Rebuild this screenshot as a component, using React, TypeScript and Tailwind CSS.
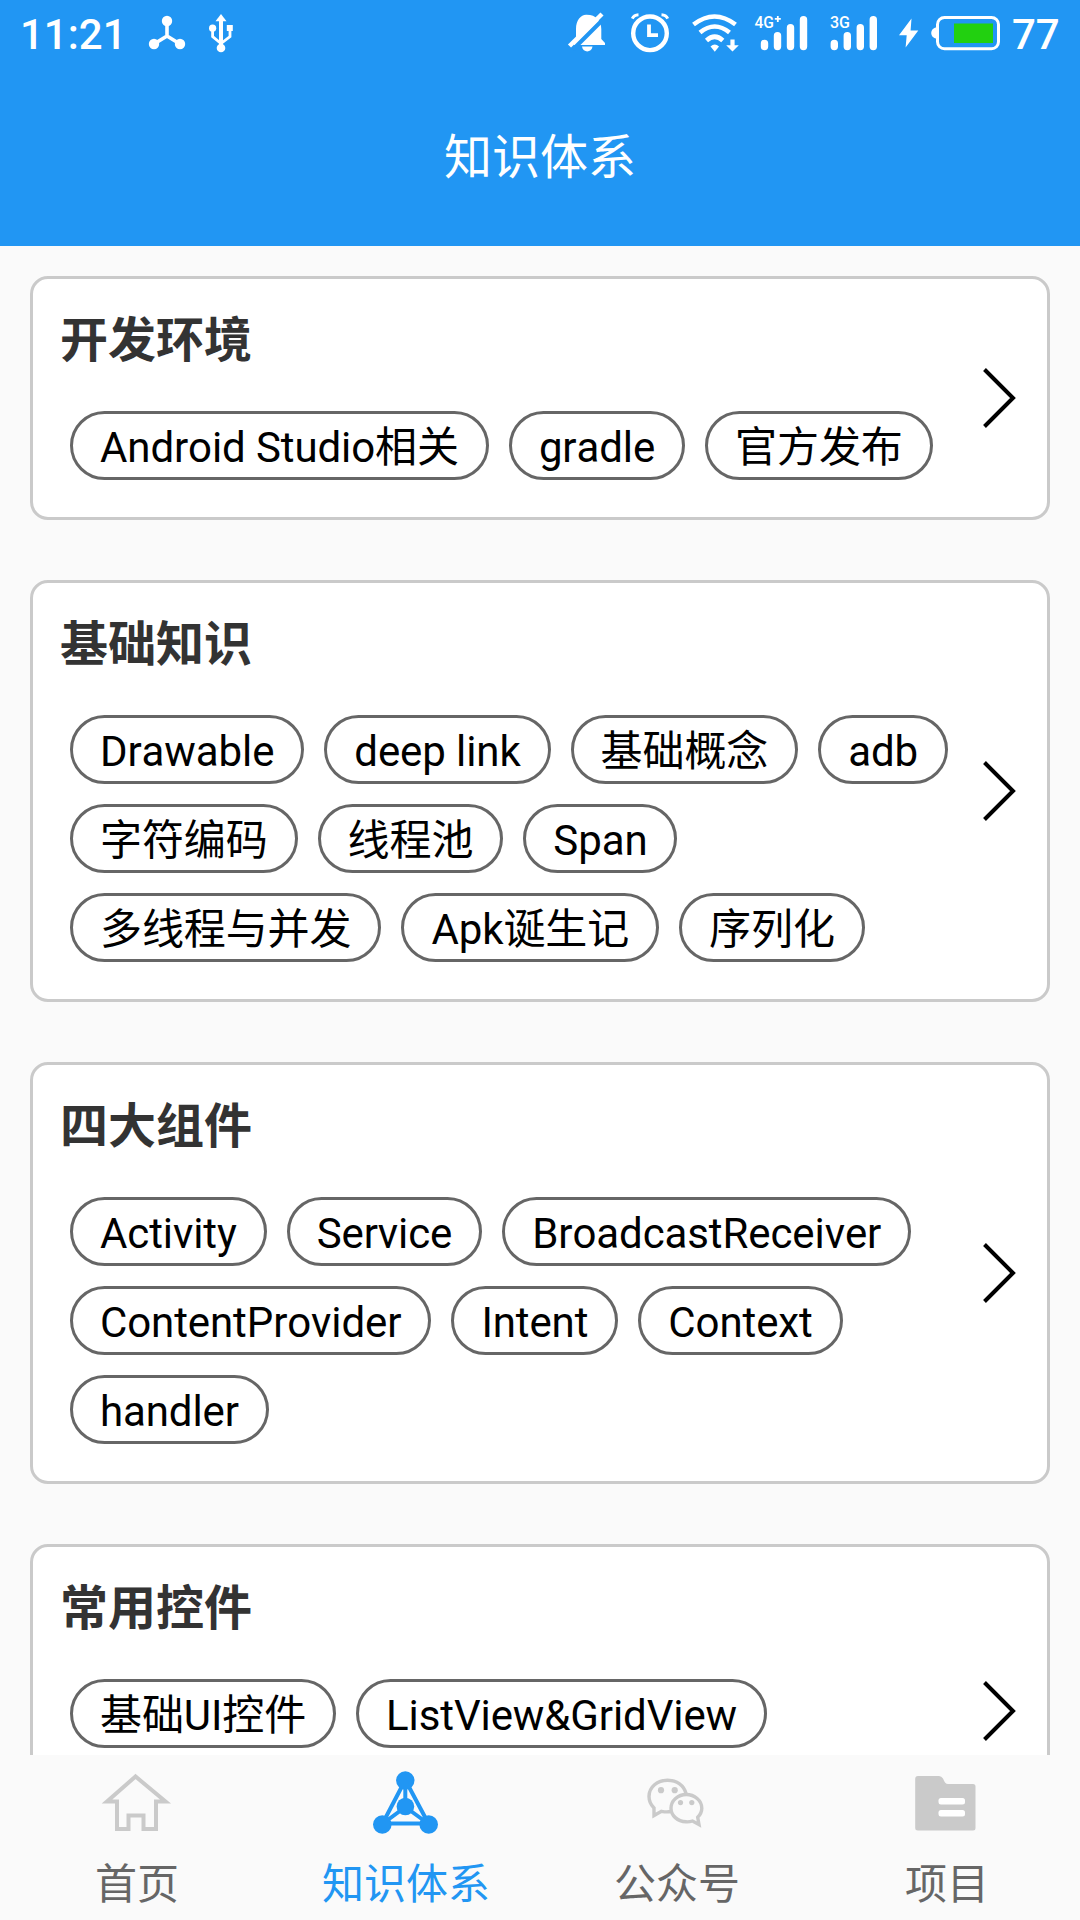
import type { ReactNode } from "react";

type Category = { title: string; tags: string[]; tall?: boolean };

const categories: Category[] = [
  { title: "开发环境", tags: ["Android Studio相关", "gradle", "官方发布"] },
  {
    title: "基础知识",
    tags: ["Drawable", "deep link", "基础概念", "adb", "字符编码", "线程池", "Span", "多线程与并发", "Apk诞生记", "序列化"],
  },
  {
    title: "四大组件",
    tags: ["Activity", "Service", "BroadcastReceiver", "ContentProvider", "Intent", "Context", "handler"],
  },
  { title: "常用控件", tags: ["基础UI控件", "ListView&GridView"], tall: true },
];

function SignalBars() {
  return (
    <g stroke="#fff" strokeWidth="7.4" strokeLinecap="round">
      <path d="M3.7 43.5V46.5M16.7 35.7V46.5M29.7 27.7V46.5M42.7 19.7V46.5" />
    </g>
  );
}

function StatusBar() {
  return (
    <div className="flex h-[66px] items-start text-white">
      <span className="ml-[20px] mt-[10px] w-[128px] text-[42px] leading-[50px] font-medium">11:21</span>
      <svg className="h-[66px] w-[38px]" viewBox="148 0 38 66" fill="#fff">
        <path d="M167 21V36L154 44M167 36L180 44" fill="none" stroke="#fff" strokeWidth="3.6" />
        <circle cx="167" cy="21" r="5.2" />
        <circle cx="154" cy="44" r="5.2" />
        <circle cx="180" cy="44" r="5.2" />
      </svg>
      <svg className="ml-[20px] h-[66px] w-[30px]" viewBox="206 0 30 66" fill="#fff">
        <path d="M221 18V48" stroke="#fff" strokeWidth="4" />
        <path d="M212.6 28V36.5L221 43.5L230 36.5V28" fill="none" stroke="#fff" strokeWidth="2.8" />
        <path d="M221 14L226.5 21.3H215.5Z" />
        <circle cx="212.6" cy="28.2" r="3.6" />
        <path d="M226.8 25h6v6h-6z" />
        <circle cx="221" cy="48" r="4.3" />
      </svg>
      <svg className="ml-[330px] h-[66px] w-[42px]" viewBox="566 0 42 66" fill="#fff">
        <path d="M574 43.5L576 39V29C576 20 581 15 586 14.8C596 14.5 601.3 21 601.3 29V39L605 43V45H574Z" />
        <path d="M582 46.5H592.5C591.5 53 583 53 582 46.5Z" />
        <path d="M573 49.5L606 16.5" stroke="#2196f3" strokeWidth="4" />
        <path d="M569.5 46L602 14" stroke="#fff" strokeWidth="4.4" />
      </svg>
      <svg className="ml-[20px] h-[66px] w-[44px]" viewBox="628 0 44 66" fill="none" stroke="#fff">
        <circle cx="650" cy="33.3" r="16.8" strokeWidth="4.4" />
        <path d="M649 24.5V35.2H658" strokeWidth="3.8" />
        <path d="M632.3 18.6Q634 15 638.5 14.8M661.5 14.8Q666 15 667.7 18.6" strokeWidth="3" />
      </svg>
      <svg className="ml-[18px] h-[66px] w-[52px]" viewBox="690 0 52 66" fill="none" stroke="#fff">
        <path d="M693.5 24.5Q714.5 8.5 735.5 24.5" strokeWidth="4.6" />
        <path d="M700 32.5Q714.7 20.5 729.5 32.5" strokeWidth="4.6" />
        <path d="M706.5 40.5Q714.7 33 722.8 40.5" strokeWidth="4.6" />
        <path d="M710.5 46.5Q714.7 42.5 719 46.5L714.8 51.8Z" fill="#fff" stroke="none" />
        <path d="M730.4 39.5h4.2v5.8h4.2L732.5 51.5L726.2 45.3h4.2z" fill="#fff" stroke="none" />
      </svg>
      <svg className="ml-[12px] h-[66px] w-[55px]" viewBox="754 0 55 66" fill="#fff">
        <text x="754.5" y="27.8" fontSize="16" fontWeight="500" textLength="19.5" lengthAdjust="spacingAndGlyphs">4G</text>
        <path d="M774.8 18.9h6M777.8 15.9v6" stroke="#fff" strokeWidth="1.8" />
        <g transform="translate(760.8 0)"><SignalBars /></g>
      </svg>
      <svg className="ml-[20px] h-[66px] w-[50px]" viewBox="829 0 50 66" fill="#fff">
        <text x="830" y="27.8" fontSize="16" fontWeight="500" textLength="20" lengthAdjust="spacingAndGlyphs">3G</text>
        <g transform="translate(830.6 0)"><SignalBars /></g>
      </svg>
      <svg className="ml-[18px] h-[66px] w-[24px]" viewBox="897 0 24 66" fill="#fff">
        <path d="M911.5 18.5L899 35.2H906.7L905.6 47.5L918.3 30.5H910.6Z" />
      </svg>
      <svg className="ml-[8px] h-[66px] w-[73px]" viewBox="929 0 73 66">
        <rect x="937.5" y="17.4" width="61" height="31.4" rx="7" fill="none" stroke="#fff" strokeWidth="3" />
        <path d="M937 27C933 28 931.2 30 931.2 33S933 38 937 39Z" fill="#fff" />
        <rect x="954" y="23.5" width="39" height="19.5" fill="#22d010" />
      </svg>
      <span className="ml-[10px] mt-[10px] text-[42px] leading-[50px] font-medium">77</span>
    </div>
  );
}

function CategoryCard({ title, tags, tall }: Category) {
  return (
    <section className="flex shrink-0 items-center rounded-[18px] border-[3px] border-[#cacaca] bg-white">
      <div className={tall ? "flex h-[327px] w-[925px] flex-col pl-[27px]" : "flex w-[925px] flex-col pb-[37px] pl-[27px]"}>
        <h2 className="mt-[26px] h-[70px] text-[48px] leading-[72px] font-bold text-[#333]">{title}</h2>
        <div className="mt-[36px] ml-[10px] flex flex-wrap gap-[20px]">
          {tags.map((tag) => (
            <span
              key={tag}
              className="h-[69px] rounded-full border-[3px] border-[#666] px-[27px] text-[42px] leading-[67px] tracking-[-0.1px] whitespace-nowrap text-black [font-kerning:none]"
            >
              {tag}
            </span>
          ))}
        </div>
      </div>
      <svg className="ml-[22px] h-[66px] w-[40px]" viewBox="0 0 40 66" fill="none" stroke="#000" strokeWidth="4">
        <path d="M4.5 4.5L33 33L4.5 61.5" />
      </svg>
    </section>
  );
}

function NavItem({ label, active, children }: { label: string; active?: boolean; children: ReactNode }) {
  return (
    <a className={active ? "flex w-[270px] flex-col items-center text-[#2196f3]" : "flex w-[270px] flex-col items-center text-[#666]"}>
      {children}
      <span className={active ? "mt-[10px] ml-[2px] text-[42px] leading-[60px]" : "mt-[10px] ml-[4px] text-[42px] leading-[60px]"}>
        {label}
      </span>
    </a>
  );
}

function BottomNav() {
  return (
    <nav className="flex h-[165px] shrink-0 bg-[#fafafa]">
      <NavItem label="首页">
        <svg className="h-[90px] w-[90px]" viewBox="90 1755 90 90" fill="none" stroke="#cacaca" strokeWidth="4">
          <path d="M135.5 1776.5L107 1801.5H117V1829H128.5V1815.5H143.5V1829H156V1801.5H165.5Z" />
        </svg>
      </NavItem>
      <NavItem label="知识体系" active>
        <svg className="h-[90px] w-[90px]" viewBox="360 1755 90 90" fill="#2196f3">
          <path
            d="M405.3 1780L382.3 1824M405.3 1780L428.7 1824M382.3 1823.5H428.7M405.3 1780V1807L382.3 1824M405.3 1807L428.7 1824"
            fill="none"
            stroke="#2196f3"
            strokeWidth="4"
          />
          <circle cx="405.3" cy="1780.5" r="9.2" />
          <circle cx="405.4" cy="1806.5" r="8.8" />
          <circle cx="382.3" cy="1824.5" r="9.3" />
          <circle cx="428.7" cy="1824.5" r="9.3" />
        </svg>
      </NavItem>
      <NavItem label="公众号">
        <svg className="h-[90px] w-[90px]" viewBox="630 1755 90 90" fill="none" stroke="#cacaca" strokeWidth="3.4">
          <path d="M670.5 1811.5Q667 1812.3 661.5 1811.3L654 1815.5V1808C650.5 1804.5 649 1800.5 649 1796.5C649 1787 657.5 1780.2 667.5 1780.2C677 1780.2 684 1785.5 686 1793.5" />
          <path d="M686.3 1794.5C694.5 1794.5 701.8 1800.5 701.8 1808.2C701.8 1812 700 1815 697.7 1817.3L699 1824.5L692.5 1821Q689.5 1822 686 1821.8C677.5 1821.5 671 1815.5 671 1808.2C671 1800.5 678 1794.5 686.3 1794.5Z" />
          <g fill="#cacaca" stroke="none">
            <circle cx="661" cy="1790.2" r="3.1" />
            <circle cx="674.7" cy="1790.2" r="3.1" />
            <circle cx="680.5" cy="1802.6" r="2.6" />
            <circle cx="691.8" cy="1802.6" r="2.6" />
          </g>
        </svg>
      </NavItem>
      <NavItem label="项目">
        <svg className="h-[90px] w-[90px]" viewBox="900 1755 90 90">
          <path
            d="M918 1776H939Q941.5 1776 943 1778.5Q945 1784 948 1784H973Q975.5 1784 975.5 1786.5V1828Q975.5 1830.5 973 1830.5H918Q915.2 1830.5 915.2 1828V1779Q915.2 1776 918 1776Z"
            fill="#cacaca"
          />
          <rect x="938.5" y="1798" width="26.5" height="6.4" rx="2.5" fill="#fff" />
          <rect x="938.5" y="1810" width="26.5" height="6.4" rx="2.5" fill="#fff" />
        </svg>
      </NavItem>
    </nav>
  );
}

export default function App() {
  return (
    <div className="flex h-[1920px] w-[1080px] flex-col overflow-hidden bg-[#fafafa] font-['Roboto','Noto_Sans_CJK_SC',sans-serif]">
      <header className="h-[246px] shrink-0 bg-[#2196f3]">
        <StatusBar />
        <h1 className="mt-[56px] text-center text-[48px] leading-[72px] text-white">知识体系</h1>
      </header>
      <main className="flex min-h-0 flex-1 flex-col gap-[60px] overflow-hidden px-[30px] pt-[30px]">
        {categories.map((c) => (
          <CategoryCard key={c.title} {...c} />
        ))}
      </main>
      <BottomNav />
    </div>
  );
}
